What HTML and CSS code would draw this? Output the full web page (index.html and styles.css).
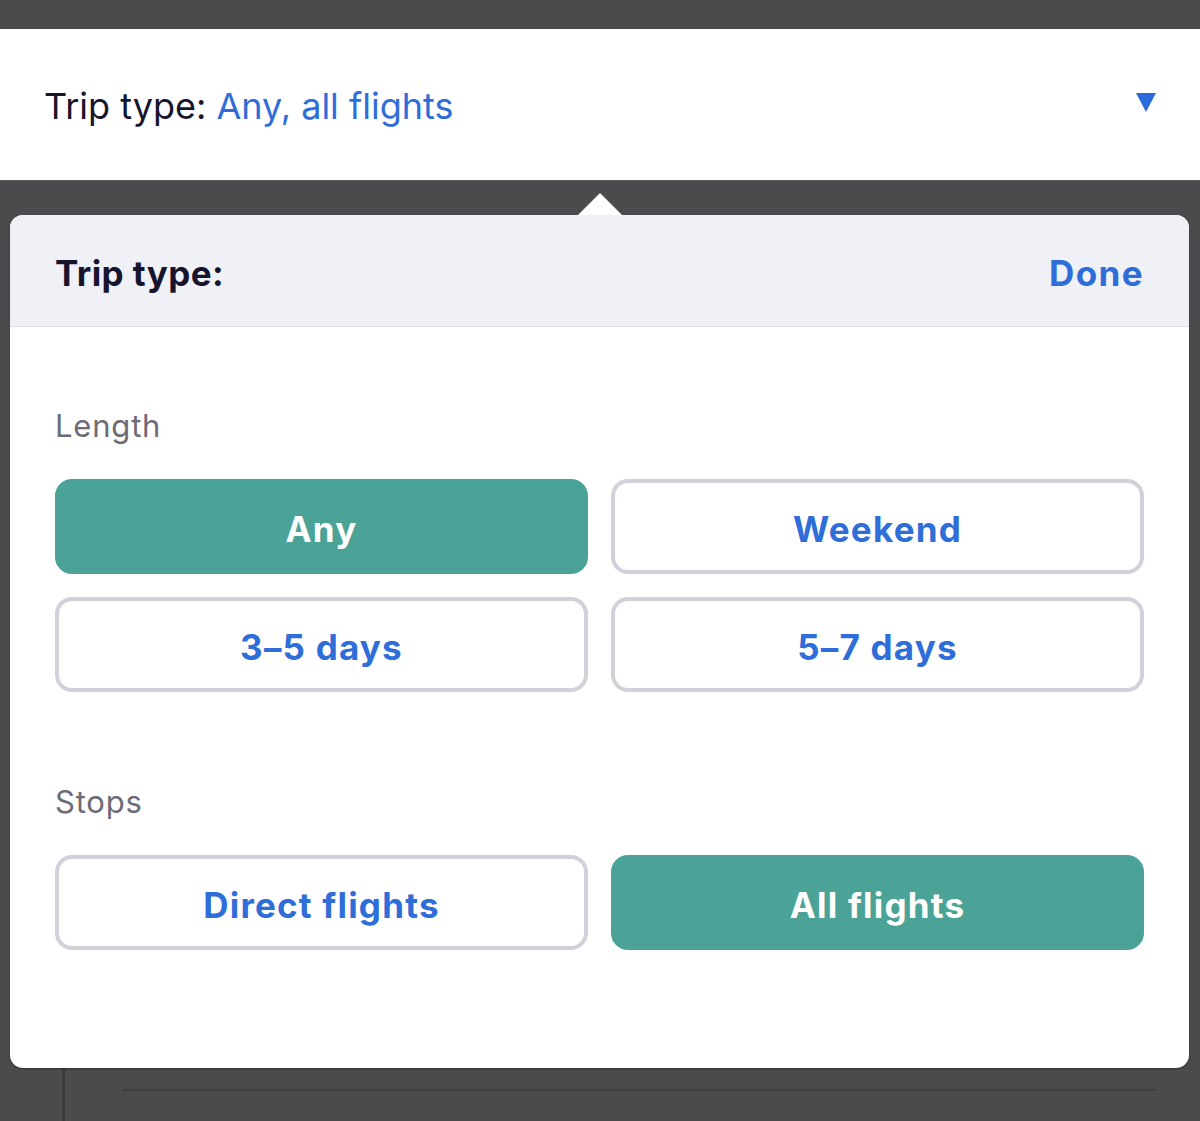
FILE: index.html
```html
<!DOCTYPE html>
<html lang="en">
<head>
<meta charset="utf-8">
<title>Trip type</title>
<link rel="stylesheet" href="styles.css">
</head>
<body>
<div class="topbar"></div>
<header class="summary">
  <div class="summary-text"><span class="summary-label">Trip type:</span> <span class="summary-value">Any, all flights</span></div>
  <svg class="caret" width="20" height="19" viewBox="0 0 20 19" aria-hidden="true"><path d="M0 0 H20 L10 19 Z" fill="#2a6ad9"/></svg>
</header>
<main class="overlay">
  <section class="panel">
    <div class="panel-head">
      <h1 class="panel-title">Trip type:</h1>
      <button class="done">Done</button>
    </div>
    <div class="panel-body">
      <h2 class="group-label">Length</h2>
      <div class="options">
        <button class="opt selected">Any</button>
        <button class="opt">Weekend</button>
        <button class="opt">3–5 days</button>
        <button class="opt">5–7 days</button>
      </div>
      <h2 class="group-label stops">Stops</h2>
      <div class="options">
        <button class="opt">Direct flights</button>
        <button class="opt selected">All flights</button>
      </div>
    </div>
  </section>
  <div class="below"><div class="rule"></div></div>
</main>
</body>
</html>
```
FILE: styles.css
```css
* { box-sizing: border-box; }
html, body { margin: 0; padding: 0; }
body {
  background: #4b4b4d;
  font-family: "Inter", "Liberation Sans", sans-serif;
  width: 1200px;
  height: 1121px;
  overflow: hidden;
}
.topbar { height: 29px; }
.summary {
  height: 152px;
  background: #ffffff;
  display: flex;
  align-items: center;
  justify-content: space-between;
  padding: 0 44px 0 44px;
  border-bottom: 1px solid #5e5e60;
}
.summary-text {
  font-size: 36px;
  letter-spacing: 0;
  line-height: 44px;
  margin-top: 3px;
}
.summary-label { color: #17152e; }
.summary-value { color: #2f6ed8; }
.caret { margin-top: -4px; }

.overlay {
  position: relative;
  padding: 34px 11px 0 10px;
}
.overlay::before {
  content: "";
  position: absolute;
  top: 12px;
  left: 578px;
  border-left: 22px solid transparent;
  border-right: 22px solid transparent;
  border-bottom: 22px solid #ffffff;
}
.panel {
  position: relative;
  background: #ffffff;
  border-radius: 13px;
  height: 853px;
  overflow: hidden;
  box-shadow: 0 1px 2px rgba(0,0,0,0.35);
}
.panel-head {
  height: 112px;
  background: #f0f1f6;
  border-bottom: 1px solid #dcdde2;
  display: flex;
  align-items: center;
  justify-content: space-between;
  padding: 5px 45px 0 45px;
}
.panel-title {
  margin: 0;
  font-size: 35px;
  font-weight: 700;
  color: #17152e;
  letter-spacing: 0.4px;
}
.done {
  border: 0;
  background: none;
  padding: 0;
  font-family: inherit;
  font-size: 35px;
  font-weight: 700;
  color: #2f6ed8;
  letter-spacing: 1.4px;
}
.panel-body { padding: 79px 45px 0 45px; }
.group-label {
  margin: 0 0 33px 0;
  font-size: 31px;
  line-height: 40px;
  font-weight: 400;
  color: #6c6b76;
  letter-spacing: 0.8px;
}
.group-label.stops { margin-top: 90px; }
.options {
  display: grid;
  grid-template-columns: 1fr 1fr;
  gap: 23px;
}
.opt {
  height: 95px;
  border: 4px solid #d0d1d9;
  border-radius: 17px;
  background: #ffffff;
  font-family: inherit;
  font-size: 35px;
  font-weight: 700;
  color: #2f6ed8;
  letter-spacing: 1.2px;
  padding: 5px 0 0 0;
}
.opt.selected {
  background: #4aa396;
  border-color: #4aa396;
  color: #ffffff;
}
.below {
  margin-left: 52px;
  height: 53px;
  border-left: 3px solid #3b3b3d;
  padding-top: 21px;
}
.rule {
  margin-left: 57px;
  width: 1033px;
  border-top: 2px solid #3e3e40;
}
```
